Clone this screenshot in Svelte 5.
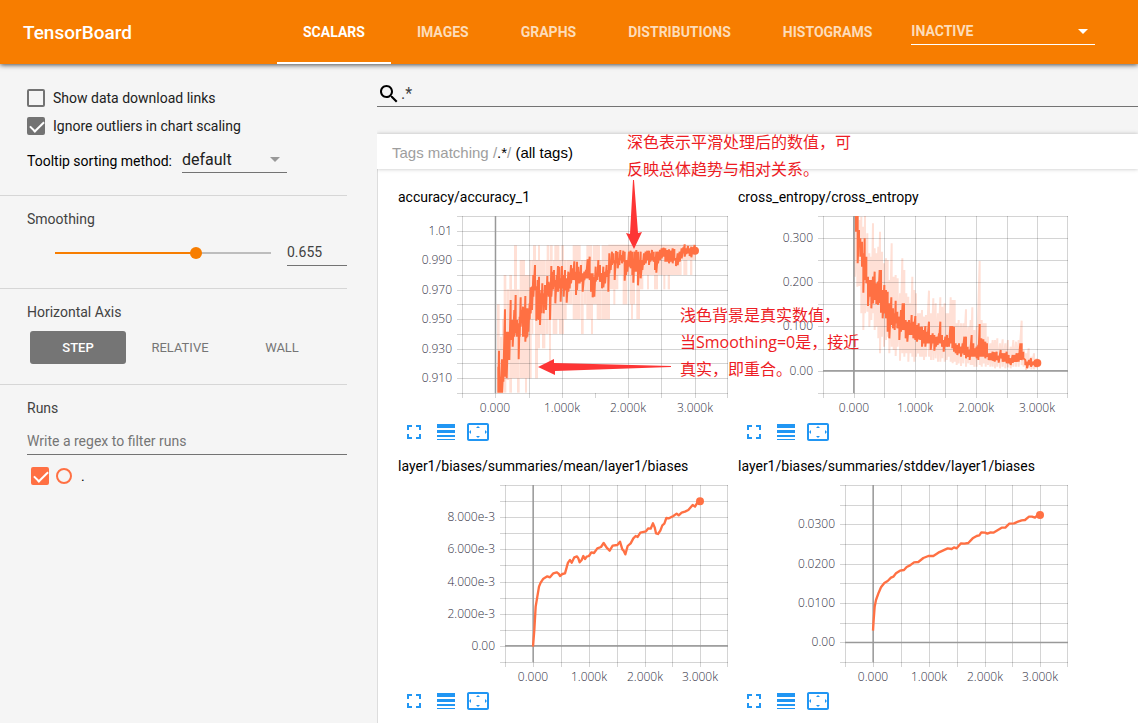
<script>
  const tabs = ['SCALARS', 'IMAGES', 'GRAPHS', 'DISTRIBUTIONS', 'HISTOGRAMS'];
  const axes = ['STEP', 'RELATIVE', 'WALL'];
  let tab = $state('SCALARS');
  let axis = $state('STEP');
  let smoothing = $state(0.655);
  let downloadLinks = $state(false);
  let ignoreOutliers = $state(true);
  let runVisible = $state(true);

  // Plot coordinates are held in thirds of a pixel.
  const xLabels = ['0.000', '1.000k', '2.000k', '3.000k'];

  // Unsmoothed accuracy moves in steps of 0.01, so it is drawn as blocks: x1 x2 top bottom.
  const accuracyBlocks = [
    [321, 329, 373, 638], [329, 336, 470, 638], [336, 342, 418, 638], [341, 349, 285, 638],
    [349, 358, 328, 600], [358, 366, 285, 638], [366, 373, 328, 595], [372, 381, 196, 595],
    [381, 389, 328, 638], [389, 405, 240, 595], [405, 411, 285, 638], [411, 419, 285, 595],
    [419, 425, 240, 595], [425, 430, 240, 462], [429, 438, 196, 417], [435, 444, 240, 595],
    [438, 444, 240, 505], [444, 450, 196, 505], [456, 466, 240, 505], [450, 456, 240, 462], [466, 476, 240, 462],
    [470, 478, 196, 420], [477, 483, 240, 550], [480, 488, 196, 418], [488, 502, 240, 462],
    [493, 508, 196, 418], [507, 522, 240, 462], [514, 522, 196, 300], [522, 530, 240, 418],
    [530, 548, 240, 373], [548, 572, 196, 418], [573, 581, 240, 462], [581, 590, 240, 373],
    [589, 606, 196, 418], [603, 609, 240, 462], [608, 625, 196, 373], [620, 630, 196, 418],
    [625, 635, 240, 418], [635, 660, 196, 418], [655, 875, 194, 285], [655, 685, 200, 328],
    [670, 676, 240, 373], [698, 712, 240, 373], [719, 735, 240, 373], [723, 729, 240, 417],
    [739, 750, 240, 417], [750, 760, 240, 328], [771, 777, 240, 328], [792, 804, 240, 328],
    [820, 826, 240, 328], [833, 840, 240, 328], [875, 918, 194, 240], [880, 892, 200, 285],
    [900, 907, 200, 285]
  ];

  const charts = [
    {
      title: 'accuracy/accuracy_1',
      xs: [216, 316, 416, 515, 615, 715, 814, 914, 1015],
      skip: 615,
      ys: [0, 44, 88, 132, 177, 221, 265, 309, 354, 398, 442, 487, 531],
      yLabels: [['1.01', 44], ['0.990', 132], ['0.970', 221], ['0.950', 309], ['0.930', 398], ['0.910', 487]],
      zeroX: 316,
      blocks: accuracyBlocks,
      top: 108,
      end: [915, 212],
      range: [
        [325, 560, 638], [327, 512, 638], [331, 590, 638], [336, 538, 638], [340, 560, 605], [345, 388, 590],
        [350, 455, 595], [354, 455, 540], [358, 490, 540], [362, 360, 480], [368, 420, 500], [373, 390, 470],
        [377, 345, 460], [381, 420, 470], [386, 430, 538], [389, 410, 470], [392, 352, 440], [396, 390, 425],
        [399, 380, 470], [403, 400, 470], [406, 348, 485], [409, 390, 475], [412, 385, 470], [415, 395, 455],
        [419, 370, 418], [422, 322, 400], [426, 320, 390], [430, 285, 350], [435, 255, 330], [439, 320, 422],
        [443, 300, 418], [447, 290, 420], [450, 340, 435], [454, 330, 400], [457, 310, 375], [461, 340, 400],
        [465, 315, 380], [468, 340, 390], [472, 288, 345], [476, 305, 350], [480, 310, 420], [484, 258, 350],
        [489, 275, 328], [492, 270, 320], [496, 300, 370], [500, 285, 335], [504, 258, 335], [508, 260, 325],
        [512, 295, 365], [516, 258, 325], [521, 285, 350], [525, 270, 330], [530, 295, 368], [535, 275, 335],
        [539, 280, 325], [543, 255, 310], [548, 265, 300], [553, 244, 300], [558, 275, 345], [561, 245, 330],
        [565, 260, 310], [569, 275, 310], [573, 255, 305], [578, 280, 335], [583, 275, 300], [588, 270, 295],
        [593, 238, 295], [599, 230, 300], [603, 280, 335], [608, 280, 352], [613, 290, 350], [617, 260, 305],
        [622, 280, 300], [625, 240, 290], [630, 255, 305], [636, 280, 325], [640, 260, 322], [645, 275, 310],
        [650, 255, 290], [655, 270, 335], [658, 220, 280], [662, 240, 270], [666, 215, 255], [670, 220, 250],
        [674, 240, 300], [678, 213, 250], [683, 215, 265], [688, 235, 255], [691, 210, 240], [696, 225, 250],
        [700, 212, 245], [704, 215, 302], [708, 240, 285], [712, 240, 275], [717, 215, 260], [722, 212, 265],
        [727, 215, 285], [730, 240, 308], [734, 215, 275], [739, 210, 275], [744, 215, 316], [748, 240, 280],
        [752, 215, 295], [757, 240, 270], [762, 220, 255], [767, 215, 250], [772, 212, 240], [777, 212, 255],
        [781, 220, 245], [786, 210, 240], [791, 215, 245], [795, 230, 270], [799, 215, 278], [804, 215, 250],
        [810, 210, 240], [815, 205, 235], [821, 203, 230], [826, 205, 245], [831, 210, 245], [837, 208, 250],
        [843, 212, 245], [848, 205, 250], [853, 207, 240], [858, 235, 258], [863, 220, 255], [869, 215, 245],
        [875, 205, 235], [880, 202, 220], [884, 193, 230], [889, 205, 222], [894, 198, 220], [899, 205, 228],
        [904, 200, 232], [909, 202, 215], [914, 195, 222]
      ]
    },
    {
      title: 'cross_entropy/cross_entropy',
      xs: [279, 371, 463, 555, 646, 739, 830, 922, 1015],
      ys: [0, 67, 133, 199, 265, 331, 398, 464, 531],
      yLabels: [['0.300', 67], ['0.200', 199], ['0.100', 331], ['0.00', 464]],
      zeroX: 371,
      zeroY: 464,
      top: 108,
      end: [922, 549],
      raw: [
        [375, 108, 290], [382, 108, 320], [388, 120, 318], [394, 110, 400], [400, 140, 450], [405, 108, 400],
        [412, 160, 395], [418, 220, 440], [424, 230, 420], [429, 130, 400], [434, 205, 450], [440, 220, 440],
        [445, 200, 475], [450, 155, 520], [456, 215, 470], [462, 250, 500], [468, 235, 480], [473, 240, 470],
        [478, 300, 520], [485, 190, 500], [491, 290, 510], [497, 285, 528], [503, 295, 500], [510, 340, 542],
        [517, 235, 520], [523, 270, 530], [529, 340, 520], [535, 350, 545], [541, 370, 520], [547, 290, 530],
        [553, 330, 545], [558, 340, 530], [564, 400, 520], [570, 400, 530], [576, 390, 530], [582, 410, 540],
        [588, 405, 530], [597, 332, 530], [603, 400, 540], [610, 355, 540], [617, 370, 535], [624, 400, 545],
        [631, 352, 545], [637, 380, 535], [644, 370, 545], [650, 400, 540], [656, 400, 530], [662, 352, 545],
        [668, 360, 550], [674, 360, 545], [680, 430, 555], [686, 420, 550], [693, 430, 558], [700, 430, 550],
        [708, 388, 560], [715, 440, 550], [722, 420, 555], [727, 382, 555], [733, 450, 560], [740, 440, 560],
        [749, 243, 555], [755, 420, 560], [761, 430, 550], [767, 430, 560], [774, 470, 555], [781, 490, 560],
        [788, 480, 560], [795, 480, 565], [802, 475, 560], [810, 490, 565], [818, 478, 560], [826, 490, 565],
        [834, 480, 562], [842, 500, 565], [850, 480, 560], [858, 485, 560], [866, 480, 560], [875, 422, 555],
        [881, 510, 560], [888, 520, 570], [896, 505, 565], [904, 530, 568], [912, 520, 568], [920, 535, 565]
      ],
      range: [
        [378, 108, 155], [383, 108, 250], [387, 150, 200], [391, 175, 230], [396, 185, 260], [400, 220, 338],
        [404, 175, 300], [409, 230, 310], [414, 290, 378], [419, 300, 350], [424, 300, 385], [429, 290, 370],
        [434, 275, 360], [439, 310, 372], [444, 305, 375], [449, 270, 370], [453, 270, 398], [458, 330, 415],
        [463, 315, 400], [468, 330, 415], [473, 335, 455], [478, 370, 475], [484, 352, 435], [489, 385, 445],
        [494, 400, 450], [497, 362, 430], [502, 395, 445], [508, 410, 480], [513, 390, 455], [518, 370, 450],
        [522, 370, 450], [527, 420, 475], [532, 425, 485], [537, 420, 465], [541, 430, 465], [545, 405, 465],
        [550, 425, 475], [556, 408, 480], [561, 435, 485], [566, 430, 478], [571, 440, 480], [576, 440, 500],
        [581, 450, 490], [586, 438, 500], [591, 455, 490], [597, 425, 490], [602, 465, 510], [608, 460, 490],
        [613, 465, 512], [618, 470, 500], [623, 470, 495], [627, 460, 490], [631, 425, 490], [636, 465, 500],
        [641, 480, 515], [646, 470, 500], [651, 465, 500], [657, 475, 500], [661, 438, 490], [667, 438, 505],
        [672, 440, 515], [677, 490, 520], [682, 495, 525], [687, 490, 520], [693, 500, 530], [698, 490, 520],
        [703, 470, 525], [708, 470, 535], [713, 500, 530], [719, 510, 540], [725, 465, 530], [730, 490, 530],
        [735, 505, 530], [740, 500, 535], [745, 495, 540], [749, 432, 530], [754, 475, 530], [760, 478, 530],
        [766, 485, 535], [771, 490, 530], [776, 520, 540], [782, 520, 540], [788, 515, 542], [794, 517, 545],
        [800, 515, 540], [806, 528, 548], [812, 510, 535], [818, 520, 545], [824, 520, 545], [830, 515, 550],
        [836, 525, 550], [842, 535, 555], [848, 525, 548], [854, 525, 545], [860, 520, 545], [866, 520, 545],
        [871, 490, 540], [875, 490, 540], [880, 515, 535], [886, 540, 555], [891, 545, 565], [897, 540, 555],
        [903, 535, 560], [910, 545, 555], [916, 540, 560], [922, 548, 552]
      ]
    },
    {
      title: 'layer1/biases/summaries/mean/layer1/biases',
      xs: [345, 429, 512, 596, 680, 764, 847, 931, 1015],
      ys: [0, 49, 97, 145, 193, 241, 290, 338, 386, 434, 482, 531],
      yLabels: [['8.000e-3', 97], ['6.000e-3', 193], ['4.000e-3', 290], ['2.000e-3', 386], ['0.00', 482]],
      zeroX: 429,
      zeroY: 482,
      top: 105,
      end: [930, 154],
      line: '429,590 433,540 437,470 442,440 447,410 452,398 460,386 472,379 480,382 490,370 500,367 506,371 510,378 517,372 525,370 530,352 534,338 540,330 545,338 553,322 561,319 565,325 569,337 575,330 580,318 585,327 590,320 597,318 604,307 612,309 622,295 633,291 641,279 650,293 659,302 668,287 682,285 690,275 697,298 701,302 706,313 713,288 722,280 730,265 737,258 743,261 751,248 768,244 775,235 782,236 789,220 794,232 798,250 804,252 811,242 817,226 823,221 829,204 837,205 850,198 860,191 866,196 875,188 885,185 895,180 908,165 915,170 922,158 930,154'
    },
    {
      title: 'layer1/biases/summaries/stddev/layer1/biases',
      xs: [345, 429, 512, 596, 680, 764, 847, 931, 1015],
      ys: [0, 59, 118, 177, 236, 295, 354, 413, 472, 531],
      yLabels: [['0.0300', 118], ['0.0200', 236], ['0.0100', 354], ['0.00', 472]],
      zeroX: 429,
      zeroY: 472,
      top: 105,
      end: [930, 195],
      line: '429,542 431,510 434,470 438,450 446,428 453,412 463,399 473,393 483,383 490,380 498,370 510,362 522,360 530,351 540,346 552,337 565,336 580,324 595,318 610,318 625,308 640,301 653,295 665,297 672,292 680,295 693,280 703,281 715,279 728,265 740,258 748,256 754,247 765,248 772,251 782,247 790,248 800,242 815,233 826,233 838,221 852,220 864,215 875,211 885,210 897,200 906,200 915,203 922,196 930,195'
    }
  ];

  const zigzag = (rows) => rows.map(([x, a, b]) => `${x},${a} ${x},${b}`).join(' ');
  const px = (x) => Math.round(x / 3 - 8);
  const py = (y) => Math.round(y / 3);
</script>

<div class="page">
  <header>
    <h1>TensorBoard</h1>
    <nav>
      {#each tabs as name}
        <button class="tab" class:active={tab === name} onclick={() => (tab = name)}>{name}</button>
      {/each}
    </nav>
    <div class="drop inactive">
      <select aria-label="Inactive dashboards"><option>INACTIVE</option></select>
      <svg class="caret" viewBox="0 0 10 5" aria-hidden="true"><path d="M0 0h10L5 5z" /></svg>
    </div>
  </header>

  <div class="body">
    <aside>
      <section class="options">
        <label class="check"><input type="checkbox" bind:checked={downloadLinks} />Show data download links</label>
        <label class="check"><input type="checkbox" bind:checked={ignoreOutliers} />Ignore outliers in chart scaling</label>
        <div class="sorting">
          <label for="sort">Tooltip sorting method:</label>
          <div class="drop">
            <select id="sort"><option>default</option><option>descending</option><option>ascending</option><option>nearest</option></select>
            <svg class="caret" viewBox="0 0 10 5" aria-hidden="true"><path d="M0 0h10L5 5z" /></svg>
          </div>
        </div>
      </section>

      <section class="smoothing">
        <h2 id="smoothing">Smoothing</h2>
        <div class="slider">
          <input type="range" min="0" max="1" step="0.001" aria-labelledby="smoothing" bind:value={smoothing} style="--at: {smoothing * 100}%" />
          <input class="line" type="text" aria-labelledby="smoothing" bind:value={smoothing} />
        </div>
      </section>

      <section class="axis">
        <h2>Horizontal Axis</h2>
        <div class="choices">
          {#each axes as name}
            <button class:active={axis === name} onclick={() => (axis = name)}>{name}</button>
          {/each}
        </div>
      </section>

      <section class="runs">
        <h2 id="runs">Runs</h2>
        <input class="line" type="text" placeholder="Write a regex to filter runs" aria-labelledby="runs" />
        <div class="run">
          <input id="run" type="checkbox" bind:checked={runVisible} />
          <button class="ring" aria-label="Show only this run"></button>
          <label for="run">.</label>
        </div>
      </section>
    </aside>

    <main>
      <div class="search">
        <svg viewBox="0 0 24 24" aria-hidden="true"><path d="M15.500 14h-.79l-.28-.27C15.410 12.590 16 11.110 16 9.500 16 5.910 13.090 3 9.500 3S3 5.910 3 9.500 5.910 16 9.500 16c1.610 0 3.090-.59 4.230-1.570l.27.28v.79l5 4.990L20.490 19l-4.990-5zm-6 0C7.010 14 5 11.990 5 9.500S7.010 5 9.500 5 14 7.010 14 9.500 11.990 14 9.500 14z" /></svg>
        <input type="text" value=".*" aria-label="Filter tags" />
      </div>

      <button class="heading"><span>Tags matching /</span>.*<span>/</span> (all tags)</button>
      <div class="cards">
        {#each charts as c}
          <article>
            <h3>{c.title}</h3>
            <svg class="chart" viewBox="0 0 330 201" role="img" aria-label={c.title}>
              <g transform="scale(.33333) translate(-24 {-c.top})">
                {#each c.blocks ?? [] as [x1, x2, a, b]}
                  <rect class="raw-block" x={x1} y={a} width={x2 - x1} height={b - a} />
                {/each}
                {#if c.raw}<polyline class="raw" points={zigzag(c.raw)} />{/if}
              </g>
              <g class="grid">
                {#each c.ys as y}
                  <rect x={px(c.xs[0]) - 5} y={py(y)} width={335 - px(c.xs[0])} height="1" />
                {/each}
                {#each c.xs as x}
                  <rect x={x === 1015 ? 329 : px(x)} y={x === c.skip ? 177 : 0} width="1" height={x === c.skip ? 5 : 182} />
                {/each}
              </g>
              <g class="zero">
                <rect x={c.zeroX / 3 - 8.6} y="0" width="1.500" height="177" />
                {#if c.zeroY}<rect x={px(c.xs[0])} y={c.zeroY / 3 - 0.6} width={330 - px(c.xs[0])} height="1.500" />{/if}
              </g>
              <g transform="scale(.33333) translate(-24 {-c.top})">
                <polyline class="smooth" class:thin={c.line} points={c.line ?? zigzag(c.range)} />
                <circle cx={c.end[0]} cy={c.end[1]} r="12" />
              </g>
              {#each c.yLabels as [text, y]}
                <text class="y" x={px(c.xs[0]) - 10} y={py(y) + 4}>{text}</text>
              {/each}
              {#each xLabels as text, i}
                <text class="x" x={px(c.xs[1 + i * 2])} y="196">{text}</text>
              {/each}
            </svg>
            <div class="tools">
              <button aria-label="Enlarge chart"><svg viewBox="0 0 24 24"><path d="M7 14H5v5h5v-2H7v-3zm-2-4h2V7h3V5H5v5zm12 7h-3v2h5v-5h-2v3zM14 5v2h3v3h2V5h-5z" /></svg></button>
              <button aria-label="Toggle log scale"><svg viewBox="0 0 24 24"><path d="M3 17h18v-2H3v2zm0 3h18v-1H3v1zm0-7h18v-3H3v3zm0-9v4h18V4H3z" /></svg></button>
              <button aria-label="Fit domain to data"><svg viewBox="0 0 24 24"><path d="M12 6l-2 2h4zM19 10v4l2-2zM5 10l-2 2 2 2zM14 16h-4l2 2zM21 3H3c-1.100 0-2 .9-2 2v14c0 1.100.9 2 2 2h18c1.100 0 2-.9 2-2V5c0-1.100-.9-2-2-2zm0 16H3V5h18z" /></svg></button>
            </div>
          </article>
        {/each}
      </div>

      <p class="note smoothed">深色表示平滑处理后的数值，可<br />反映总体趋势与相对关系。</p>
      <p class="note actual">浅色背景是真实数值，<br />当Smoothing=0是，接近<br />真实，即重合。</p>
      <svg class="arrow down" viewBox="0 0 16 69" aria-hidden="true"><path d="M7 0h1l4 53 4-1-8 17-8-16 4 1z" /></svg>
      <svg class="arrow left" viewBox="0 0 133 16" aria-hidden="true"><path d="M0 8L16 0v4l117 3v1L17 12v4z" /></svg>
    </main>
  </div>
</div>

<style>
  :global(body) {
    margin: 0;
    background: #f5f5f5;
    font-family: Roboto, "Noto Sans CJK SC", sans-serif;
    font-size: 14px;
  }
  * { box-sizing: border-box; }
  button, input, select { font: inherit; color: inherit; padding: 0; border: 0; border-radius: 0; background: none; margin: 0; outline: 0; }
  button { cursor: pointer; }
  h1, h2, h3, p { margin: 0; font-weight: 400; }

  .page { display: flex; flex-direction: column; min-height: 100vh; }
  header {
    display: flex;
    align-items: center;
    height: 64px;
    background: #f77d00;
    color: #fff;
    position: relative;
    z-index: 1;
    box-shadow: 0 1px 5px rgba(0, 0, 0, 0.7);
  }
  h1 { flex: 0 0 254px; margin-left: 23px; font-size: 19px; font-weight: 500; }
  nav { display: flex; align-self: stretch; }
  .tab { padding: 2px 26px 0; border-bottom: 2px solid transparent; font-weight: 700; color: #fddcb9; }
  .tab.active { color: #fff; border-color: #fff; }

  .drop { display: grid; align-items: center; border-bottom: 1px solid #737373; }
  .drop > * { grid-area: 1 / 1; }
  .drop select { appearance: none; width: 100%; font-size: 16px; height: 26px; color: #212121; }
  .caret { width: 10px; height: 5px; justify-self: end; margin-right: 7px; fill: #999; pointer-events: none; }
  .inactive { flex: 0 0 184px; margin-left: 13px; margin-top: -1px; border-color: #fff; }
  .inactive select { font-size: 14px; font-weight: 700; color: #fddcb9; }
  .inactive .caret { fill: #fff; }

  .body { display: flex; flex: 1; }
  aside { flex: 0 0 347px; color: #424242; }
  section { padding: 0 0 0 27px; border-bottom: 1px solid #d6d6d6; }
  h2 { font-size: 14px; line-height: 16px; }

  .options { height: 132px; padding-top: 20px; }
  .check { display: flex; align-items: center; gap: 8px; height: 28px; color: #212121; }
  input[type="checkbox"] { appearance: none; flex: none; width: 18px; height: 18px; border: 2px solid #737373; border-radius: 2px; display: block; }
  input[type="checkbox"]:checked { background: #737373; }
  input[type="checkbox"]:checked::after {
    content: "";
    display: block;
    width: 6px;
    height: 12px;
    margin: -1px 0 0 4px;
    border: solid #fff;
    border-width: 0 2px 2px 0;
    transform: rotate(45deg);
  }
  .sorting { display: flex; align-items: center; gap: 10px; margin-top: 6px; color: #000; }
  .sorting label { padding-top: 2px; }
  .sorting .drop { width: 105px; }

  .smoothing { height: 93px; padding-top: 15px; }
  .slider { display: flex; align-items: center; margin: 10px 0 0 22px; gap: 10px; }
  .line { border-bottom: 1px solid #737373; height: 29px; padding-top: 2px; width: 60px; color: #424242; min-width: 0; }
  .line::placeholder { color: #757575; opacity: 1; }
  input[type="range"] { appearance: none; flex: 1; min-width: 0; height: 12px; margin-top: 3px; }
  input[type="range"]::-webkit-slider-runnable-track {
    height: 2px;
    background: linear-gradient(to right, transparent 6px, #f77d00 6px, #f77d00 var(--at), #bdbdbd var(--at), #bdbdbd calc(100% - 6px), transparent calc(100% - 6px));
  }
  input[type="range"]::-webkit-slider-thumb { appearance: none; width: 12px; height: 12px; margin-top: -5px; border-radius: 50%; background: #f77d00; }

  .axis { height: 96px; padding-top: 15px; }
  .choices { display: flex; gap: 6px; margin: 11px 0 0 3px; }
  .choices button { width: 96px; height: 33px; border-radius: 3px; font-size: 13px; color: #757575; }
  .choices .active { background: #757575; color: #fff; font-weight: 500; }

  .runs { padding-top: 15px; border: 0; }
  .runs .line { display: block; width: 100%; margin-top: 10px; }
  .run { display: flex; align-items: center; gap: 7px; margin: 12px 0 0 4px; color: #000; }
  .run input:checked { background: #ff7043; border-color: #ff7043; }
  .ring { width: 16px; height: 16px; border: 2px solid #ff7043; border-radius: 50%; }
  .run label { margin-left: 2px; }

  main { flex: 1; min-width: 0; margin-left: 30px; display: flex; flex-direction: column; position: relative; overflow: hidden; }
  .search { display: flex; align-items: center; height: 43px; padding-top: 17px; border-bottom: 1px solid #737373; }
  .search svg { width: 24px; height: 24px; }
  .search input { flex: 1; min-width: 0; font-size: 16px; color: #424242; }
  .heading {
    flex: none;
    height: 35px;
    margin-top: 27px;
    padding: 1px 15px 0;
    background: #fff;
    text-align: left;
    font-family: "Liberation Sans", sans-serif;
    font-size: 15px;
    box-shadow: 0 0 4px rgba(0, 0, 0, 0.25);
    position: relative;
  }
  .heading span { color: #9e9e9e; }
  .cards {
    flex: 1;
    display: flex;
    flex-wrap: wrap;
    align-content: flex-start;
    gap: 14px 10px;
    padding: 20px 20px 0;
    background: #fff;
    border-left: 1px solid #ddd;
  }
  article { width: 330px; }
  h3 { font-size: 14px; line-height: 16px; color: #000; white-space: nowrap; }
  .chart { display: block; width: 330px; height: 201px; margin-top: 11px; overflow: hidden; }
  .raw-block { fill: #ffe0d6; }
  .raw { fill: none; stroke: #ffe0d6; stroke-width: 6; }
  .smooth { fill: none; stroke: #ff7043; stroke-width: 6; stroke-linejoin: bevel; }
  .thin { stroke-width: 7; stroke-linejoin: round; }
  circle { fill: #ff7043; }
  .grid { fill: rgba(0, 0, 0, 0.17); }
  .zero { fill: #999; }
  text { font-family: "Open Sans", sans-serif; font-size: 12px; font-weight: 300; fill: #32313f; }
  text.y { text-anchor: end; }
  text.x { text-anchor: middle; }
  .tools { display: flex; gap: 8px; margin: 3px 0 0 4px; }
  .tools button, .tools svg { display: block; width: 24px; height: 24px; fill: #2196f3; }

  .note { position: absolute; font-family: "Open Sans", "Noto Sans CJK SC", sans-serif; font-size: 16px; font-weight: 400; line-height: 27px; color: #ed1c24; white-space: nowrap; pointer-events: none; }
  .smoothed { left: 250px; top: 65px; }
  .actual { left: 303px; top: 238px; }
  .arrow { position: absolute; fill: #fd3535; pointer-events: none; }
  .down { left: 249px; top: 116px; width: 16px; height: 69px; }
  .left { left: 161px; top: 295px; width: 133px; height: 16px; }
</style>
